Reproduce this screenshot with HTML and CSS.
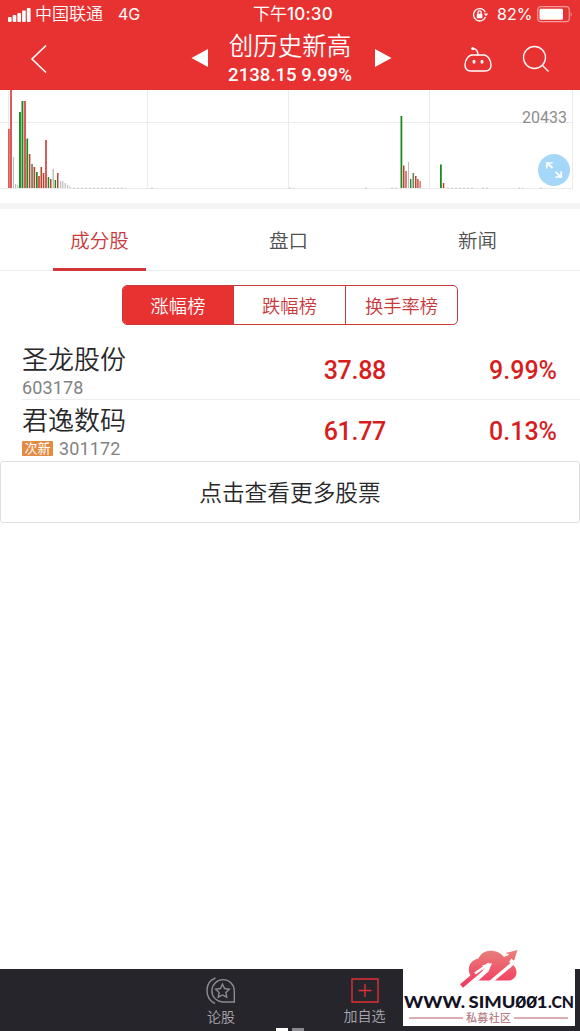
FILE: index.html
```html
<!DOCTYPE html>
<html lang="zh-CN">
<head>
<meta charset="utf-8">
<title>创历史新高</title>
<link rel="stylesheet" href="styles.css">
</head>
<body>
<div class="app">
  <header class="header">
    <div class="status">
      <svg class="signal" width="24" height="16" viewBox="0 0 24 16" fill="#fff"><rect x="0" y="10" width="3.6" height="5" rx="1"/><rect x="4.7" y="8" width="3.6" height="7" rx="1"/><rect x="9.4" y="6" width="3.6" height="9" rx="1"/><rect x="14.1" y="3.5" width="3.6" height="11.5" rx="1"/><rect x="18.8" y="1" width="3.8" height="14" rx="1"/></svg>
      <span class="carrier">中国联通</span><span class="network">4G</span>
      <span class="time">下午<b>10:30</b></span>
      <svg class="lock" width="17" height="16" viewBox="0 0 17 16" fill="none" stroke="#fff" stroke-width="1.3"><path d="M13.3 5.1A6.2 6.2 0 1 0 13.5 10"/><path d="M11.8 6.6h4.5L14 9.3z" fill="#fff" stroke="none"/><rect x="4.8" y="6.8" width="5.6" height="4.5" rx=".6" fill="#fff" stroke="none"/><path d="M6 7V5.4a1.6 1.6 0 0 1 3.2 0V7"/></svg>
      <span class="percent">82%</span>
      <svg class="battery" width="36" height="17" viewBox="0 0 36 17"><rect x=".7" y=".7" width="31.6" height="15" rx="3" fill="none" stroke="#f39a98" stroke-width="1.2"/><rect x="2.5" y="2.7" width="23.5" height="11" rx="1.3" fill="#fff"/><path d="M33.7 5.7q2 2.5 0 5z" fill="#f39a98"/></svg>
    </div>
    <div class="nav">
      <svg class="back" width="18" height="30" viewBox="0 0 18 30"><path d="M16 1.5 2 15l14 13.5" fill="none" stroke="#fff" stroke-width="1.6"/></svg>
      <svg class="prev" width="18" height="18" viewBox="0 0 18 18"><path d="M17 0v18L.5 9z" fill="#fff"/></svg>
      <div class="heading">
        <h1 class="title">创历史新高</h1>
        <p class="quote">2138.15 9.99%</p>
      </div>
      <svg class="next" width="18" height="18" viewBox="0 0 18 18"><path d="M0 0v18L16.500 9z" fill="#fff"/></svg>
      <svg class="robot" width="30" height="27" viewBox="0 0 30 27" fill="none" stroke="#fff" stroke-width="1.4"><path d="M9 9h12c3.500 0 7 5.200 7 10 0 4-2.300 6-6 6H8c-3.700 0-6-2-6-6 0-4.800 3.500-10 7-10Z"/><path d="M15 9c0-3.500-1-6-5-6.500"/><circle cx="9.700" cy="2.600" r="1.500" fill="#fff" stroke="none"/><ellipse cx="11" cy="15.700" rx="1.500" ry="2" fill="#fff" stroke="none"/><ellipse cx="19" cy="15.700" rx="1.500" ry="2" fill="#fff" stroke="none"/></svg>
      <svg class="search" width="28" height="28" viewBox="0 0 28 28" fill="none" stroke="#fff" stroke-width="1.300"><circle cx="12.500" cy="12.500" r="11"/><path d="m20.500 20.500 6 6"/></svg>
    </div>
  </header>

  <section class="chart">
    <svg width="580" height="113" viewBox="0 0 580 113">
      <path d="M0 32.500h573M0 98.500h573M8.500 0v98M147.500 0v98M288.500 0v98M429.500 0v98M572.500 0v98" stroke="#ebebeb" fill="none"/>
      <g fill="#dc5a5a"><path d="M8 39h1.800v59H8zM10 0h2v98h-2zM23.800 11h2.200v87h-2.200zM45 50h2v48h-2zM38 86h2v12h-2zM405.200 81h1.600v17h-1.600zM419.500 91h1.300v7h-1.300z"/></g>
      <g fill="#1d8a20"><path d="M19 22h1.900v76H19zM21.500 11h1.800v87h-1.800zM26.400 48.500h1.700v49.500h-1.700zM36 82h1.700v16H36zM47.700 87h1.500v11h-1.500zM54.600 90h1.500v8h-1.500zM400.500 26h1.800v72h-1.800zM410 89h1.400v9H410zM440 74.500h1.800v23.500H440z"/></g>
      <g fill="#b84631"><path d="M28.800 64h1.600v34h-1.600zM33.500 77h1.700v21h-1.700zM40.500 77h1.600v21h-1.600zM42.800 83h1.600v15h-1.600zM50 89h1.500v9H50zM57 83h1.500v15H57zM403 75.500h1.500v22.500H403zM415 86h1.500v12H415zM417.200 89h1.400v9h-1.400zM442.800 93h1.500v5h-1.500z"/></g>
      <g fill="#708057"><path d="M31.200 74h1.700v24h-1.700zM412.500 83h1.600v15h-1.600z"/></g>
      <g fill="#bcbcbc"><path d="M13 67h1v31h-1zM15 94h1.200v4H15zM17.300 95h1v3h-1zM52.500 79h1.400v19h-1.400zM60 91h1.200v7H60zM62.200 91h1.200v7h-1.200zM64.600 93h1.200v5h-1.200zM67 95h1.200v3H67zM69.300 96.500h1.200v1.500h-1.200zM408 72h1v26h-1z"/></g>
      <path d="M73 98h53M289 98h5M365 98h3M391 98h8M447 98h28M482 98h6M518 98h5M540 98h4M151 98h4" stroke="#ccc" stroke-dasharray="2 2" fill="none"/>
    </svg>
    <span class="volume">20433</span>
    <span class="expand"><svg width="18" height="18" viewBox="0 0 18 18" fill="none" stroke="#fff" stroke-width="1.700"><path d="M1.800 7.500V2H7.500M2 2l5.500 5M16.200 10.500V16h-5.700M16 16l-5.500-5"/></svg></span>
  </section>

  <nav class="tabs"><a class="tab active">成分股</a><a class="tab">盘口</a><a class="tab">新闻</a></nav>

  <div class="segments"><span class="segment selected">涨幅榜</span><span class="segment">跌幅榜</span><span class="segment">换手率榜</span></div>

  <main class="stocks">
    <div class="stock"><div class="identity"><div class="name">圣龙股份</div><div class="code">603178</div></div><span class="price">37.88</span><span class="change">9.99%</span></div>
    <div class="stock"><div class="identity"><div class="name">君逸数码</div><div class="code"><i class="badge">次新</i>301172</div></div><span class="price">61.77</span><span class="change">0.13%</span></div>
  </main>
  <div class="more">点击查看更多股票</div>

  <footer class="footer">
    <div class="action discuss"><svg width="30" height="28" viewBox="0 0 30 28" fill="none" stroke="#8c8a91" stroke-width="1.400"><path d="M9.500 1C-1.500 5-2 21 9 26.500M28.300 25H16.500a11.200 11.200 0 1 1 11.800-11.200z"/><path d="m16.500 7.200 2.100 4.300 4.700.7-3.400 3.300.8 4.700-4.200-2.200-4.200 2.200.8-4.700-3.400-3.300 4.700-.7z"/></svg><span>论股</span></div>
    <div class="action favorite"><svg width="28" height="26" viewBox="0 0 28 26" fill="none" stroke="#df3034" stroke-width="1.400"><path d="M1 1h26v23H1zM14 6v13M7.500 12.500h13"/></svg><span>加自选</span></div>
    <div class="pages"><i></i><i></i></div>
  </footer>

  <aside class="watermark">
    <svg width="172" height="93" viewBox="0 0 172 93">
      <defs><linearGradient id="rose" gradientUnits="userSpaceOnUse" x1="0" y1="17" x2="0" y2="54"><stop stop-color="#e8807a"/><stop offset="1" stop-color="#f5365f"/></linearGradient></defs>
      <path d="M68 43C63 36 67 27 75.500 25.500C79 16 94 15 101 24L106.500 21.500L102.500 20L114.500 17L111 28L108.500 25.500L106 29C117 34 115 47 106 47.500H72Z" fill="url(#rose)"/>
      <path d="m87 49.500 25-21" stroke="#fff" stroke-width="3.500"/>
      <path d="m67 52 17-15.500" stroke="#fff" stroke-width="5"/>
      <path d="m58.500 53 20-17" stroke="url(#rose)" stroke-width="4.500"/>
      <path d="m72 40.500 14-10" stroke="#fff" stroke-width="2.500"/>
      <path d="m79 32.500 10-2.500-3.500 8.500z" fill="#fff"/>
      <g class="domain"><text x="1" y="75" textLength="61" lengthAdjust="spacingAndGlyphs">WWW.</text><text x="65.500" y="75" textLength="79" lengthAdjust="spacingAndGlyphs">SIMU001</text><text x="145" y="75" textLength="26" lengthAdjust="spacingAndGlyphs">.CN</text></g>
      <path d="m113 74 9-10.500m3 10.500 9-10.500" stroke="#131225" stroke-width="1.500"/>
      <path d="M6 85h54m51 0h54" stroke="#bd5c66"/>
      <text class="community" x="63" y="89" textLength="45">私募社区</text>
    </svg>
  </aside>
</div>
</body>
</html>
```
FILE: styles.css
```css
* { box-sizing: border-box; }
body { margin: 0; background: #fff; color: #28282b; font-family: Roboto, "Noto Sans CJK SC", sans-serif; }
svg { display: block; flex: none; }
h1, p { margin: 0; font-weight: 400; }
i { font-style: normal; }
.title, .tab, .segment, .name, .more, .action { font-family: "Noto Sans CJK SC DemiLight", "Noto Sans CJK SC", sans-serif; font-weight: 350; }
.app { position: relative; width: 580px; height: 1031px; display: flex; flex-direction: column; overflow: hidden; white-space: nowrap; }
.header { height: 90px; background: #e83131; color: #fff; flex: none; }
.status { height: 29px; padding-left: 8px; display: flex; align-items: center; font: 17px/29px Inter, "Noto Sans CJK SC", sans-serif; }
.signal { margin-right: 3px; }
.carrier { width: 83px; font-weight: 350; }
.network { width: 135px; font-size: 16px; }
.time { width: 219px; font-size: 17px; }
.time b { font-weight: 500; letter-spacing: .2px; }
.lock { margin-right: 8px; }
.percent { width: 40px; font-size: 16px; }
.nav { height: 60px; padding-left: 30px; display: flex; align-items: center; }
.back { margin-right: 143px; }
.prev, .next { margin-top: -2px; }
.heading { width: 134px; margin: 2px 18px 0 14px; text-align: center; }
.title { font-size: 24.500px; line-height: 30px; }
.quote { font-size: 18.600px; line-height: 31px; font-weight: 500; }
.robot { margin-left: 70px; }
.search { margin-left: 29px; }
.chart { position: relative; height: 119px; border-bottom: 6px solid #f4f4f4; flex: none; }
.volume { position: absolute; right: 13px; top: 18px; font-size: 16px; line-height: 20px; color: #8d8d8d; }
.expand { position: absolute; left: 538px; top: 64px; width: 32px; height: 32px; border-radius: 50%; background: #a5d8f8; display: grid; place-items: center; }
.tabs { height: 62px; display: grid; grid-template-columns: repeat(3, 189px); padding-left: 5px; border-bottom: 1px solid #ececec; flex: none; }
.tab { color: #505050; text-align: center; font-size: 19.500px; line-height: 61px; }
.active { width: 93px; height: 62px; justify-self: center; color: #c9393c; border-bottom: 3px solid #d33638; }
.segments { width: 336px; height: 40px; margin: 14px 0 16px 122px; border: 1px solid #c9393c; border-radius: 5px; overflow: hidden; display: grid; grid-template-columns: 110px 112px 112px; flex: none; }
.segment { color: #c9393c; text-align: center; font-size: 18.300px; line-height: 38px; }
.segment + .segment { border-left: 1px solid #c9393c; }
.selected { background: #e83131; color: #fff; }
.stocks { flex: none; height: 120px; padding-left: 22px; }
.stock { height: 59px; display: grid; grid-template-columns: 272px 125px 138px; align-items: center; border-bottom: 1px solid #ededed; }
.stock:last-child { height: 61px; padding-top: 2px; border: 0; }
.name { font-size: 26px; line-height: 32px; padding-bottom: 2px; }
.code { display: flex; align-items: center; gap: 6px; font-size: 18px; line-height: 23px; color: #828282; letter-spacing: .15px; }
.badge { width: 31px; height: 15px; background: #e38a43; border-radius: 1px; color: #fff; text-align: center; font-size: 13px; line-height: 15px; letter-spacing: 0; }
.price, .change { color: #d71e1e; font-size: 25px; font-weight: 500; text-align: right; }
.price { width: 92px; letter-spacing: -.3px; }
.more { height: 62px; border: 1px solid #dfdfdf; border-radius: 3px; text-align: center; font-size: 22.700px; line-height: 60px; flex: none; }
.footer { position: relative; height: 62px; margin-top: auto; display: flex; background: #27252c; color: #aaa8ae; flex: none; }
.action { height: 62px; padding-top: 8px; display: flex; flex-direction: column; align-items: center; font-size: 14px; line-height: 22px; }
.discuss { width: 146px; margin-left: 148px; }
.favorite { width: 141px; }
.action span { margin-top: auto; margin-bottom: 5px; }
.favorite svg { margin-top: 1px; }
.pages { position: absolute; left: 276px; bottom: 0; display: flex; gap: 4px; }
.pages i { width: 12px; height: 3px; background: #fff; }
.pages i + i { background: #8c8a91; }
.watermark { position: absolute; left: 403px; top: 933px; background: #fff; }
.domain { fill: #131225; font: 900 16.500px Lato, sans-serif; }
.community { fill: #b78186; font: 500 11px "Noto Sans CJK SC", sans-serif; }
```
